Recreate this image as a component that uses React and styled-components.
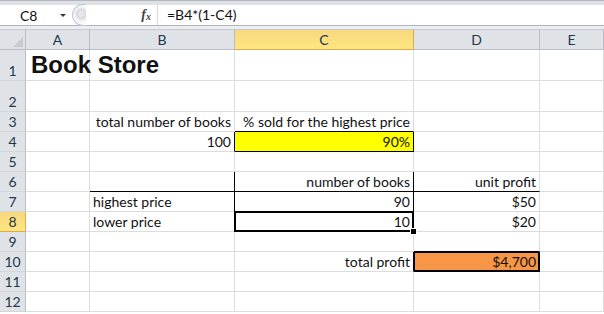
import React from "react"
import styled, { createGlobalStyle } from "styled-components"

const GlobalStyle = createGlobalStyle`
  html, body {
    margin: 0;
    padding: 0;
    background: #fff;
    overflow: hidden;
  }
  body {
    font-family: Lato, "Liberation Sans", sans-serif;
  }
`

const cols = ["A", "B", "C", "D", "E"]

// each row: height and the cells A..E
// cell: t = text, align, fill, r = right border colour, b = bottom border colour
const BLACK = "#000"
const rows = [
  { h: 30, cells: [{ t: "Book Store", title: true }, {}, {}, {}, {}] },
  { h: 30, cells: [{}, {}, {}, {}, {}] },
  { h: 19, cells: [{}, { t: "total number of books", align: "right" }, { t: "% sold for the highest price", align: "right", b: BLACK }, {}, {}] },
  { h: 19, cells: [{}, { t: "100", align: "right", r: BLACK }, { t: "90%", align: "right", fill: "#ffff00", r: BLACK, b: BLACK }, {}, {}] },
  { h: 19, cells: [{}, {}, {}, {}, {}] },
  { h: 19, cells: [{}, { r: BLACK, b: BLACK }, { t: "number of books", align: "right", r: BLACK, b: BLACK }, { t: "unit profit", align: "right", b: BLACK }, {}] },
  { h: 19, cells: [{}, { t: "highest price", r: BLACK }, { t: "90", align: "right", r: BLACK }, { t: "$50", align: "right" }, {}] },
  { h: 19, cells: [{}, { t: "lower price" }, { t: "10", align: "right", selected: true }, { t: "$20", align: "right" }, {}] },
  { h: 19, cells: [{}, {}, {}, { b: BLACK }, {}] },
  { h: 19, cells: [{}, {}, { t: "total profit", align: "right", r: BLACK }, { t: "$4,700", align: "right", fill: "#f79646", r: BLACK, b: BLACK, thick: true }, {}] },
  { h: 19, cells: [{}, {}, {}, {}, {}] },
  { h: 19, cells: [{}, {}, {}, {}, {}] },
]

const App = () => {
  return (
    <Wrapper>
      <GlobalStyle />
      <FormulaBar>
        <NameBox>
          <NameText>C8</NameText>
          <DropArrow />
        </NameBox>
        <Splitter>
          <SplitterKnob />
        </Splitter>
        <FxArea>
          <Fx>
            f<sub>x</sub>
          </Fx>
        </FxArea>
        <FormulaInput>=B4*(1-C4)</FormulaInput>
      </FormulaBar>
      <Gap />
      <Sheet>
        <Corner>
          <svg width="12" height="12" viewBox="0 0 12 12">
            <polygon points="11,1 11,11 1,11" fill="#c6cbd1" />
          </svg>
        </Corner>
        {cols.map((c) => (
          <ColHead key={c} $active={c === "C"}>
            {c}
          </ColHead>
        ))}
        {rows.map((row, i) => (
          <React.Fragment key={i}>
            <RowHead $h={row.h} $active={i === 7}>
              {i + 1}
            </RowHead>
            {row.cells.map((cell, j) => (
              <Cell
                key={j}
                $h={row.h}
                $align={cell.align}
                $fill={cell.fill}
                $r={cell.r}
                $b={cell.b}
                $thick={cell.thick}
                $title={cell.title}
                $open={cell.title || cell.selected}
              >
                {cell.t}
                {cell.selected && (
                  <>
                    <Selection />
                    <FillHandle />
                  </>
                )}
              </Cell>
            ))}
          </React.Fragment>
        ))}
      </Sheet>
    </Wrapper>
  )
}

const Wrapper = styled.div`
  width: 604px;
  height: 314px;
  overflow: hidden;
  background: #fff;
`

const FormulaBar = styled.div`
  display: flex;
  height: 20px;
  border-top: 4px solid #dee2e7;
  border-bottom: 1px solid #aeb4bb;
  box-shadow: 0 -1px 0 #b3b8be;
  margin-top: 1px;
  position: relative;
`

const NameBox = styled.div`
  width: 72px;
  display: flex;
  align-items: center;
  background: #fff;
`

const NameText = styled.span`
  font-size: 14px;
  color: #111;
  margin-left: 20px;
  flex: 1;
`

const DropArrow = styled.span`
  width: 0;
  height: 0;
  border-left: 3px solid transparent;
  border-right: 3px solid transparent;
  border-top: 3px solid #3b3b3b;
  margin-right: 6px;
  margin-top: 1px;
`

const Splitter = styled.div`
  width: 14px;
  background: #fff;
  display: flex;
  align-items: center;
`

const SplitterKnob = styled.div`
  width: 16px;
  height: 22px;
  border-radius: 11px 0 0 11px;
  border: 1px solid #c3c8ce;
  border-right: none;
  background: radial-gradient(circle at 65% 45%, #e4e7ea 0 3px, #d4d8dc 4px, #f3f4f6 7px, #fbfbfc 10px);
  box-sizing: border-box;
`

const FxArea = styled.div`
  width: 71px;
  background: #fff;
  display: flex;
  align-items: center;
  justify-content: flex-end;
  border-right: 1px solid #d5d9de;
`

const Fx = styled.span`
  font-family: "Liberation Serif", serif;
  font-style: italic;
  font-weight: bold;
  font-size: 14px;
  color: #444;
  margin-right: 6px;
  sub {
    font-size: 10px;
    vertical-align: -1px;
  }
`

const FormulaInput = styled.div`
  flex: 1;
  background: #fff;
  font-size: 14px;
  color: #111;
  padding-left: 9px;
  line-height: 20px;
`

const Gap = styled.div`
  height: 3px;
  background: #eceef1;
`

const Sheet = styled.div`
  display: grid;
  grid-template-columns: 26px 64px 145px 179px 126px 1fr;
  font-size: 14px;
`

const headBase = `
  box-sizing: border-box;
  display: flex;
  align-items: center;
  justify-content: center;
  color: #253648;
  font-size: 14px;
`

const Corner = styled.div`
  ${headBase}
  height: 21px;
  background: #dfe3e8;
  border-top: 1px solid #c5cad0;
  border-right: 1px solid #b9bec4;
  border-bottom: 1px solid #b9bec4;
  justify-content: flex-end;
  align-items: flex-end;
  padding: 0 1px 1px 0;
`

const ColHead = styled.div`
  ${headBase}
  height: 21px;
  border-top: 1px solid #c5cad0;
  border-right: 1px solid ${(p) => (p.$active ? "#e3a94b" : "#b9bec4")};
  border-bottom: 1px solid ${(p) => (p.$active ? "#e3a94b" : "#b9bec4")};
  background: ${(p) =>
    p.$active ? "linear-gradient(#f8d87f, #fee680)" : "#dfe3e8"};
`

const RowHead = styled.div`
  ${headBase}
  height: ${(p) => p.$h + 1}px;
  padding-top: ${(p) => (p.$h > 20 ? 10 : 0)}px;
  border-right: 1px solid ${(p) => (p.$active ? "#e3a94b" : "#b9bec4")};
  border-bottom: 1px solid ${(p) => (p.$active ? "#e3a94b" : "#d2d6db")};
  background: ${(p) =>
    p.$active ? "linear-gradient(#f8d87f, #fee680)" : "#dfe3e8"};
`

const Cell = styled.div`
  box-sizing: border-box;
  position: relative;
  height: ${(p) => p.$h + 1}px;
  display: flex;
  align-items: flex-end;
  justify-content: ${(p) => (p.$align === "right" ? "flex-end" : "flex-start")};
  padding: 0 3px 0 3px;
  background: ${(p) => p.$fill || "#fff"};
  border-right: 1px solid ${(p) => p.$r || "#dadcdd"};
  border-bottom: 1px solid ${(p) => p.$b || "#dadcdd"};
  box-shadow: ${(p) => (p.$thick ? "inset 1px 1px 0 #000, inset -1px -1px 0 #000" : "none")};
  color: #111;
  line-height: 19px;
  white-space: nowrap;
  overflow: ${(p) => (p.$open ? "visible" : "hidden")};
  z-index: ${(p) => (p.$open ? 2 : "auto")};

  ${(p) =>
    p.$title &&
    `
    font-family: "Liberation Sans", Arial, sans-serif;
    font-weight: bold;
    font-size: 24px;
    line-height: 30px;
    padding-left: 5px;
    align-items: center;
  `}
`

const Selection = styled.div`
  position: absolute;
  top: -1px;
  left: -1px;
  right: -1px;
  bottom: -1px;
  border: 2px solid #000;
  pointer-events: none;
`

const FillHandle = styled.div`
  position: absolute;
  right: -4px;
  bottom: -4px;
  width: 5px;
  height: 5px;
  background: #000;
  border: 1px solid #fff;
`

export default App
